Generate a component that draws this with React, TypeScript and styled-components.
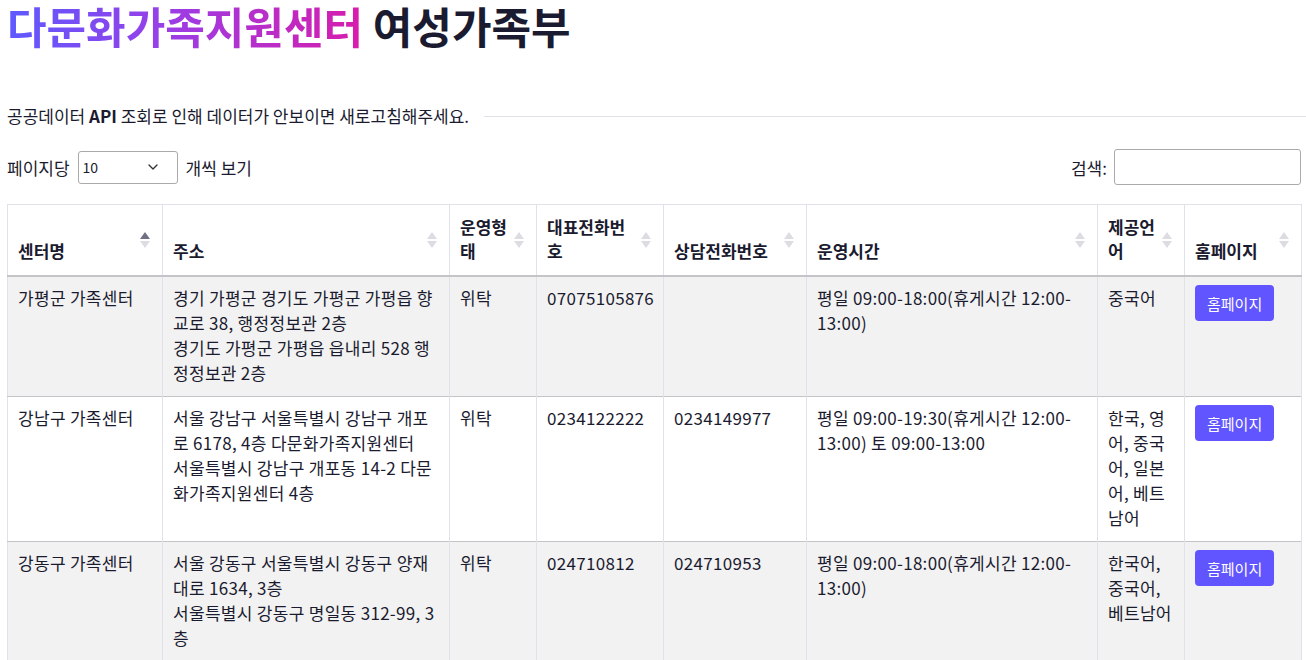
import React from 'react';
import styled, { createGlobalStyle } from 'styled-components';
import { ChevronDown } from 'lucide-react';

type Center = {
  name: string;
  address: string[];
  type: string;
  phone: string;
  counsel: string;
  hours: string;
  lang: string;
};

const centers: Center[] = [
  {
    name: '가평군 가족센터',
    address: ['경기 가평군 경기도 가평군 가평읍 향교로 38, 행정정보관 2층', '경기도 가평군 가평읍 읍내리 528 행정정보관 2층'],
    type: '위탁',
    phone: '07075105876',
    counsel: '',
    hours: '평일 09:00-18:00(휴게시간 12:00-13:00)',
    lang: '중국어',
  },
  {
    name: '강남구 가족센터',
    address: ['서울 강남구 서울특별시 강남구 개포로 6178, 4층 다문화가족지원센터', '서울특별시 강남구 개포동 14-2 다문화가족지원센터 4층'],
    type: '위탁',
    phone: '0234122222',
    counsel: '0234149977',
    hours: '평일 09:00-19:30(휴게시간 12:00-13:00) 토 09:00-13:00',
    lang: '한국, 영어, 중국어, 일본어, 베트남어',
  },
  {
    name: '강동구 가족센터',
    address: ['서울 강동구 서울특별시 강동구 양재대로 1634, 3층', '서울특별시 강동구 명일동 312-99, 3층'],
    type: '위탁',
    phone: '024710812',
    counsel: '024710953',
    hours: '평일 09:00-18:00(휴게시간 12:00-13:00)',
    lang: '한국어, 중국어, 베트남어',
  },
];

const columns = [
  { label: '센터명', width: 155, active: true },
  { label: '주소', width: 287 },
  { label: '운영형태', width: 87 },
  { label: '대표전화번호', width: 127 },
  { label: '상담전화번호', width: 143 },
  { label: '운영시간', width: 291 },
  { label: '제공언어', width: 87 },
  { label: '홈페이지', width: 117 },
];

const App: React.FC = () => {
  return (
    <>
      <GlobalStyle />
      <Page>
        <Title>
          <Gradient>다문화가족지원센터</Gradient> 여성가족부
        </Title>

        <Notice>
          <span>
            공공데이터 <b>API</b> 조회로 인해 데이터가 안보이면 새로고침해주세요.
          </span>
          <Rule />
        </Notice>

        <Controls>
          <Length>
            페이지당
            <SelectWrap>
              <Select defaultValue="10">
                <option value="10">10</option>
                <option value="25">25</option>
                <option value="50">50</option>
              </Select>
              <Chevron size={16} strokeWidth={2} />
            </SelectWrap>
            개씩 보기
          </Length>
          <Search>
            검색:
            <SearchInput type="search" />
          </Search>
        </Controls>

        <Table>
          <colgroup>
            {columns.map((c) => (
              <col key={c.label} style={{ width: c.width }} />
            ))}
          </colgroup>
          <thead>
            <tr>
              {columns.map((c) => (
                <Th key={c.label}>
                  {c.label}
                  <SortIcon>
                    <Up $active={!!c.active} />
                    <Down />
                  </SortIcon>
                </Th>
              ))}
            </tr>
          </thead>
          <tbody>
            {centers.map((c, i) => (
              <Row key={c.name} $striped={i % 2 === 0}>
                <Td>{c.name}</Td>
                <Td>
                  {c.address.map((a) => (
                    <div key={a}>{a}</div>
                  ))}
                </Td>
                <Td>{c.type}</Td>
                <Td>{c.phone}</Td>
                <Td>{c.counsel}</Td>
                <Td>{c.hours}</Td>
                <Td>{c.lang}</Td>
                <Td>
                  <HomeButton>홈페이지</HomeButton>
                </Td>
              </Row>
            ))}
          </tbody>
        </Table>
      </Page>
    </>
  );
};

const GlobalStyle = createGlobalStyle`
  html, body {
    margin: 0;
    padding: 0;
    background: #fff;
  }
  body {
    font-family: "Noto Sans CJK KR", sans-serif;
    color: #1b1b30;
    overflow: hidden;
  }
`;

const Page = styled.div`
  padding: 0 5px 0 7px;
`;

const Title = styled.h1`
  margin: 0;
  font-family: "Noto Sans CJK KR", sans-serif;
  font-size: 43px;
  font-weight: 700;
  line-height: 50px;
  color: #1a1a30;
`;

const Gradient = styled.span`
  background: linear-gradient(90deg, #5d5aff 0%, #9a3ee6 45%, #d81cab 100%);
  -webkit-background-clip: text;
  background-clip: text;
  -webkit-text-fill-color: transparent;
`;

const Notice = styled.div`
  display: flex;
  align-items: center;
  gap: 15px;
  margin: 54px -5px 0 0;
  font-size: 17px;
  line-height: 24px;

  b {
    font-weight: 700;
  }
`;

const Rule = styled.div`
  flex: 1;
  height: 1px;
  background: #e1e1ec;
`;

const Controls = styled.div`
  display: flex;
  justify-content: space-between;
  align-items: center;
  margin-top: 21px;
  font-size: 17px;
`;

const Length = styled.label`
  display: flex;
  align-items: center;
  gap: 8px;
`;

const SelectWrap = styled.div`
  position: relative;
  display: flex;
`;

const Select = styled.select`
  appearance: none;
  width: 100px;
  height: 33px;
  padding: 0 28px 0 4px;
  border: 1px solid #aaa;
  border-radius: 3px;
  background: #fff;
  font-family: "Noto Sans CJK KR", sans-serif;
  font-size: 14px;
  color: #1b1b30;
`;

const Chevron = styled(ChevronDown)`
  position: absolute;
  right: 17px;
  top: 8px;
  color: #333;
  pointer-events: none;
`;

const Search = styled.label`
  display: flex;
  align-items: center;
  gap: 7px;
`;

const SearchInput = styled.input`
  width: 187px;
  height: 36px;
  box-sizing: border-box;
  border: 1px solid #aaa;
  border-radius: 3px;
  padding: 0 6px;
`;

const Table = styled.table`
  margin-top: 19px;
  width: 1294px;
  table-layout: fixed;
  border-collapse: collapse;
  border: 1px solid #e1e1ec;
  font-size: 17px;
  line-height: 25px;
`;

const Th = styled.th`
  position: relative;
  padding: 10px 26px 12px 10px;
  vertical-align: bottom;
  text-align: left;
  font-weight: 600;
  line-height: 24px;
  border-right: 1px solid #e1e1ec;
  border-bottom: 2px solid #c4c4c8;
`;

const SortIcon = styled.span`
  position: absolute;
  right: 12px;
  top: 50%;
  transform: translateY(-50%);
  display: flex;
  flex-direction: column;
  gap: 2px;
`;

const Up = styled.span<{ $active: boolean }>`
  width: 0;
  height: 0;
  border-left: 5px solid transparent;
  border-right: 5px solid transparent;
  border-bottom: 7px solid ${(p) => (p.$active ? '#707084' : '#dcdce2')};
`;

const Down = styled.span`
  width: 0;
  height: 0;
  border-left: 5px solid transparent;
  border-right: 5px solid transparent;
  border-top: 7px solid #dcdce2;
`;

const Row = styled.tr<{ $striped: boolean }>`
  background: ${(p) => (p.$striped ? '#f2f2f2' : '#fff')};
  border-top: 1px solid #c4c4c8;
`;

const Td = styled.td`
  padding: 8px 10px 11px;
  vertical-align: top;
  letter-spacing: 0.3px;
  border-right: 1px solid #e1e1ec;
`;

const HomeButton = styled.button`
  height: 36px;
  padding: 0 12px;
  border: none;
  border-radius: 4px;
  background: #6155ff;
  color: #fff;
  font-family: "Noto Sans CJK KR", sans-serif;
  font-size: 15px;
  cursor: pointer;
`;

export default App;
